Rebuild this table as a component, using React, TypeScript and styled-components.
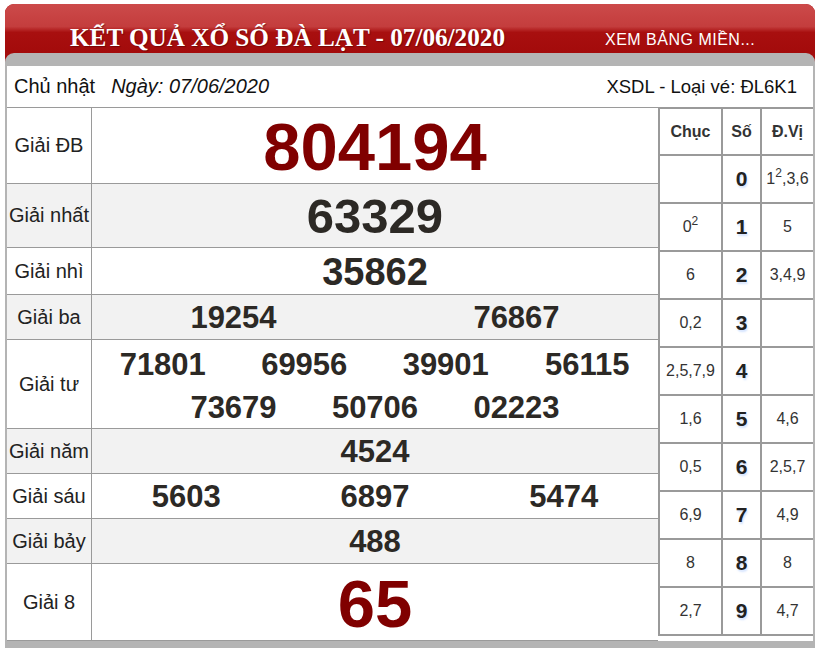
import React from "react";
import styled, { createGlobalStyle } from "styled-components";

const GlobalStyle = createGlobalStyle`
  html, body { margin: 0; padding: 0; background: #fff; }
  body { font-family: "Liberation Sans", Arial, sans-serif; }
  * { box-sizing: border-box; }
`;

const Card = styled.div`
  margin: 4px 0 0 5px;
  width: 810px;
  background: #a50c0c;
  border-radius: 9px 9px 0 0;
  overflow: hidden;
`;

const Header = styled.div`
  height: 49px;
  padding-top: 18px;
  display: flex;
  align-items: center;
  background: linear-gradient(
    to bottom,
    #cc4a4a 0%,
    #c43d3d 46%,
    #a80f0f 58%,
    #a30b0b 100%
  );
`;

const Title = styled.h1`
  flex: 0 0 565px;
  margin: 0;
  text-align: center;
  font-family: "Liberation Serif", "Times New Roman", serif;
  font-weight: bold;
  font-size: 25.2px;
  color: #fff;
  white-space: nowrap;
  text-shadow: 1px 1px 1px rgba(60, 0, 0, 0.45);
`;

const MoreLink = styled.a`
  padding-left: 35px;
  padding-top: 4px;
  font-size: 16px;
  letter-spacing: 0.5px;
  color: #fff;
  text-decoration: none;
  white-space: nowrap;
`;

const Band = styled.div`
  background: #b4b4b4;
  border-radius: 9px 9px 0 0;
  padding: 13px 2px 7px 2px;
`;

const Panel = styled.div`
  background: #fff;
`;

const InfoRow = styled.div`
  height: 42px;
  display: flex;
  align-items: center;
  justify-content: space-between;
  padding: 0 16px 0 7px;
  border-bottom: 1px solid #9a9a9a;
  color: #111;
`;

const DayInfo = styled.div`
  font-size: 20px;
  white-space: nowrap;
`;

const DateText = styled.span`
  font-style: italic;
  margin-left: 16px;
`;

const TicketInfo = styled.div`
  font-size: 18.5px;
  white-space: nowrap;
`;

const Results = styled.div`
  display: flex;
  align-items: flex-start;
`;

const PrizeTable = styled.div`
  flex: none;
  width: 651px;
`;

const PrizeRow = styled.div<{ $h: number; $alt?: boolean }>`
  display: flex;
  height: ${(p) => p.$h}px;
  border-bottom: 1px solid #9a9a9a;
  background: ${(p) => (p.$alt ? "#f2f2f2" : "#fff")};
`;

const PrizeLabel = styled.div`
  flex: none;
  width: 85px;
  border-right: 1px solid #9a9a9a;
  display: flex;
  align-items: center;
  justify-content: center;
  font-size: 20px;
  color: #222;
  white-space: nowrap;
`;

const PrizeNumbers = styled.div`
  flex: 1;
  display: flex;
  flex-wrap: wrap;
  align-items: center;
  align-content: center;
  justify-content: center;
  padding-top: 3px;
`;

const Num = styled.span<{ $basis: number; $size: number; $lh?: number; $red?: boolean }>`
  flex: 0 0 ${(p) => p.$basis}%;
  text-align: center;
  font-weight: bold;
  font-size: ${(p) => p.$size}px;
  line-height: ${(p) => (p.$lh ? `${p.$lh}px` : "1.1")};
  color: ${(p) => (p.$red ? "#800000" : "#2c2925")};
`;

const LotoTable = styled.div`
  flex: none;
  width: 155px;
  display: grid;
  grid-template-columns: 61px 37px 51px;
  grid-template-rows: 45px;
  grid-auto-rows: 46px;
  gap: 2px;
  padding: 1px 0 2px 2px;
  background: #9a9a9a;
`;

const LotoHead = styled.div`
  background: #fff;
  display: flex;
  align-items: center;
  justify-content: center;
  font-weight: bold;
  font-size: 16px;
  color: #333;
`;

const LotoCell = styled.div`
  background: #fff;
  display: flex;
  align-items: center;
  justify-content: center;
  font-size: 16px;
  color: #333;
  white-space: nowrap;
`;

const LotoValue = styled.span`
  display: block;
`;

const LotoDigit = styled(LotoCell)`
  font-weight: bold;
  font-size: 21px;
  color: #222;
  text-shadow: 1px 2px 2px rgba(200, 220, 255, 0.8);
`;

const Sup = styled.sup`
  font-size: 12px;
  line-height: 0;
  vertical-align: 7px;
`;

type Prize = {
  label: string;
  h: number;
  alt?: boolean;
  nums: string[];
  basis: number;
  size: number;
  lh?: number;
  red?: boolean;
};

const prizes: Prize[] = [
  { label: "Giải ĐB", h: 76, nums: ["804194"], basis: 100, size: 67, red: true },
  { label: "Giải nhất", h: 64, alt: true, nums: ["63329"], basis: 100, size: 49 },
  { label: "Giải nhì", h: 47, nums: ["35862"], basis: 100, size: 38 },
  { label: "Giải ba", h: 45, alt: true, nums: ["19254", "76867"], basis: 50, size: 31 },
  {
    label: "Giải tư",
    h: 89,
    nums: ["71801", "69956", "39901", "56115", "73679", "50706", "02223"],
    basis: 25,
    size: 31,
    lh: 43,
  },
  { label: "Giải năm", h: 45, alt: true, nums: ["4524"], basis: 100, size: 31 },
  { label: "Giải sáu", h: 45, nums: ["5603", "6897", "5474"], basis: 33.3333, size: 31 },
  { label: "Giải bảy", h: 45, alt: true, nums: ["488"], basis: 100, size: 31 },
  { label: "Giải 8", h: 77, nums: ["65"], basis: 100, size: 67, red: true },
];

type Loto = { chuc: React.ReactNode; dv: React.ReactNode };

const loto: Loto[] = [
  { chuc: "", dv: <>1<Sup>2</Sup>,3,6</> },
  { chuc: <>0<Sup>2</Sup></>, dv: "5" },
  { chuc: "6", dv: "3,4,9" },
  { chuc: "0,2", dv: "" },
  { chuc: "2,5,7,9", dv: "" },
  { chuc: "1,6", dv: "4,6" },
  { chuc: "0,5", dv: "2,5,7" },
  { chuc: "6,9", dv: "4,9" },
  { chuc: "8", dv: "8" },
  { chuc: "2,7", dv: "4,7" },
];

export default function App() {
  return (
    <>
      <GlobalStyle />
      <Card>
        <Header>
          <Title>KẾT QUẢ XỔ SỐ ĐÀ LẠT - 07/06/2020</Title>
          <MoreLink href="#">XEM BẢNG MIỀN...</MoreLink>
        </Header>
        <Band>
          <Panel>
            <InfoRow>
              <DayInfo>
                Chủ nhật<DateText>Ngày: 07/06/2020</DateText>
              </DayInfo>
              <TicketInfo>XSDL - Loại vé: ĐL6K1</TicketInfo>
            </InfoRow>
            <Results>
              <PrizeTable>
                {prizes.map((p) => (
                  <PrizeRow key={p.label} $h={p.h} $alt={p.alt}>
                    <PrizeLabel>{p.label}</PrizeLabel>
                    <PrizeNumbers>
                      {p.nums.map((n, i) => (
                        <Num key={i} $basis={p.basis} $size={p.size} $lh={p.lh} $red={p.red}>
                          {n}
                        </Num>
                      ))}
                    </PrizeNumbers>
                  </PrizeRow>
                ))}
              </PrizeTable>
              <LotoTable>
                <LotoHead>Chục</LotoHead>
                <LotoHead>Số</LotoHead>
                <LotoHead>Đ.Vị</LotoHead>
                {loto.map((r, i) => (
                  <React.Fragment key={i}>
                    <LotoCell>
                      <LotoValue>{r.chuc}</LotoValue>
                    </LotoCell>
                    <LotoDigit>{i}</LotoDigit>
                    <LotoCell>
                      <LotoValue>{r.dv}</LotoValue>
                    </LotoCell>
                  </React.Fragment>
                ))}
              </LotoTable>
            </Results>
          </Panel>
        </Band>
      </Card>
    </>
  );
}
